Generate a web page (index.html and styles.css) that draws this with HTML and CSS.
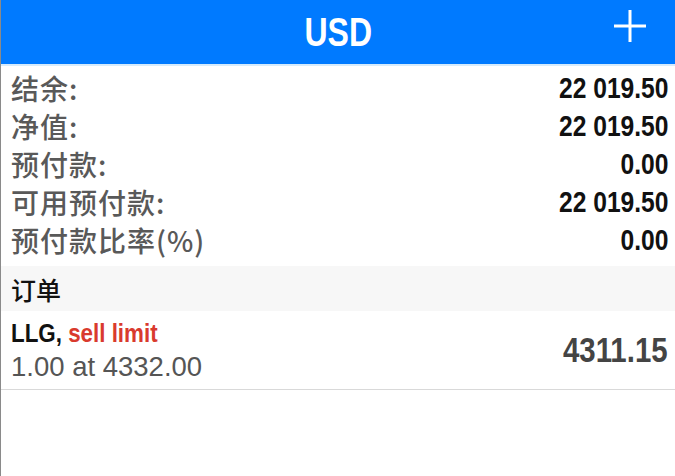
FILE: index.html
```html
<!DOCTYPE html>
<html lang="zh-CN">
<head>
    <meta charset="UTF-8">
    <meta name="viewport" content="width=device-width, initial-scale=1.0">
    <title>USD</title>
    <link rel="stylesheet" href="styles.css">
</head>
<body>
<div class="screen">
    <header class="topbar">
        <h1 class="title">USD</h1>
        <button class="add-btn" aria-label="Add">
            <svg width="32" height="32" viewBox="0 0 32 32">
                <path d="M16 0V32M0 16H32" stroke="#fff" stroke-width="3"/>
            </svg>
        </button>
    </header>

    <ul class="summary">
        <li><span class="label">结余:</span><span class="value">22 019.50</span></li>
        <li><span class="label">净值:</span><span class="value">22 019.50</span></li>
        <li><span class="label">预付款:</span><span class="value">0.00</span></li>
        <li><span class="label">可用预付款:</span><span class="value">22 019.50</span></li>
        <li><span class="label">预付款比率(%)</span><span class="value">0.00</span></li>
    </ul>

    <div class="section-title">订单</div>

    <div class="order">
        <div class="order-info">
            <div class="order-name">LLG, <span class="sell">sell limit</span></div>
            <div class="order-volume">1.00 at 4332.00</div>
        </div>
        <div class="order-price">4311.15</div>
    </div>
</div>
</body>
</html>
```

FILE: styles.css
```css
:root {
    --blue: #007aff;
    --label: #595959;
    --red: #d93a2e;
}

body {
    margin: 0;
    background: #fff;
    font-family: 'Liberation Sans', Arial, 'Noto Sans CJK SC', sans-serif;
}

.screen {
    width: 675px;
    height: 476px;
    border-left: 1px solid #8a8a8a;
    box-sizing: border-box;
    overflow: hidden;
}

.topbar {
    height: 64px;
    background: var(--blue);
    border-bottom: 2px solid #d6ebfc;
    display: flex;
    align-items: center;
    justify-content: center;
    position: relative;
}

/* no condensed face installed, so narrow the bold type by hand */
.title,
.value,
.order-price,
.order-name {
    display: inline-block;
    font-family: 'Liberation Sans', Arial, sans-serif;
    font-weight: bold;
}

.title {
    margin: 0;
    color: #fff;
    font-size: 40px;
    transform: scaleX(0.8);
}

.add-btn {
    position: absolute;
    right: 29px;
    top: 10px;
    background: none;
    border: none;
    padding: 0;
    width: 32px;
    height: 32px;
}

.summary {
    list-style: none;
    margin: 0;
    padding: 3px 7px 7px 10px;
}

.summary li {
    height: 38px;
    display: flex;
    align-items: center;
    justify-content: space-between;
}

.label {
    color: var(--label);
    font-family: 'Noto Sans CJK SC', sans-serif;
    font-weight: 500;
    font-size: 28px;
    letter-spacing: 1px;
}

.value {
    color: #111;
    font-size: 30px;
    transform: scaleX(0.82);
    transform-origin: right center;
}

.section-title {
    background: #f7f7f7;
    height: 45px;
    display: flex;
    align-items: center;
    padding-left: 10px;
    font-family: 'Noto Sans CJK SC', sans-serif;
    font-weight: 500;
    font-size: 25px;
    color: #111;
}

.order {
    height: 78px;
    border-bottom: 1px solid #d9d9d9;
    display: flex;
    align-items: center;
    justify-content: space-between;
    padding: 0 7px 0 10px;
}

.order-name {
    font-size: 26px;
    color: #111;
    transform: scaleX(0.86);
    transform-origin: left center;
    white-space: nowrap;
}

.sell {
    color: var(--red);
}

.order-volume {
    font-size: 27.5px;
    color: #555;
    margin-top: 2px;
}

.order-price {
    font-size: 35px;
    color: #444;
    transform: scaleX(0.84);
    transform-origin: right center;
}
```
